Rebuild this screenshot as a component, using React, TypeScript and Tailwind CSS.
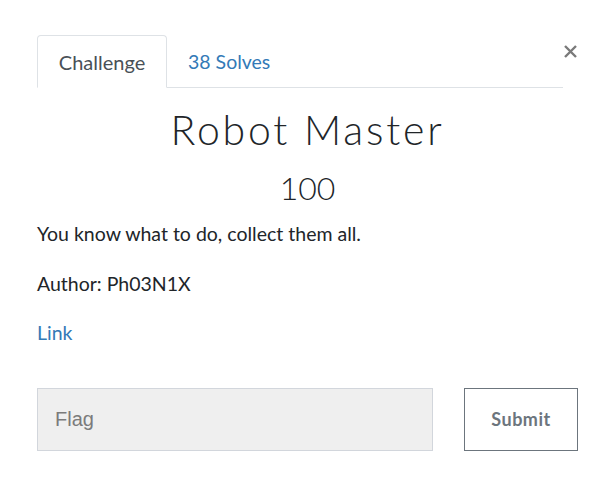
import React from "react";

export default function App() {
  return (
    <div className="relative w-[614px] h-[504px] bg-white text-[#212529] font-['Lato','Noto_Sans',sans-serif]">
      <button
        aria-label="Close"
        className="absolute left-[562px] top-[43px] w-[17px] h-[17px] flex items-center justify-center"
      >
        <svg width="15" height="15" viewBox="0 0 15 15">
          <path d="M2 2 L13 13 M13 2 L2 13" stroke="#7a7a7a" strokeWidth="2.4" strokeLinecap="butt" />
        </svg>
      </button>

      <div className="pl-[37px] pt-[35px] w-[578px]">
        <nav className="flex w-[526px] border-b border-[#dee2e6]">
          <div className="-mb-px w-[130px] h-[53px] border border-[#dee2e6] border-b-white rounded-t-[4px] bg-white flex items-center justify-center text-[20px] text-[#495057] pt-[1px]">
            Challenge
          </div>
          <div className="h-[52px] pl-[21px] flex items-center text-[19.5px] text-[#337ab7] pt-[1px]">
            38 Solves
          </div>
        </nav>

        <h2 className="mt-[18px] text-center text-[41px] leading-[48px] font-light tracking-[2.8px] text-[#212529]">
          Robot Master
        </h2>
        <h3 className="mt-[15px] text-center text-[32px] leading-[38px] font-light text-[#212529]">
          100
        </h3>

        <div className="mt-[13px] text-[19.5px] leading-[28px]">
          <p>You know what to do, collect them all.</p>
          <p className="mt-[22px]">Author: Ph03N1X</p>
          <p className="mt-[21px]">
            <a className="text-[#337ab7]">Link</a>
          </p>
        </div>

        <div className="mt-[41px] flex gap-[31px]">
          <input
            placeholder="Flag"
            className="w-[396px] h-[63px] bg-[#efefef] border border-[#d2d6dc] px-[17px] text-[20px] font-['Liberation_Sans',Arial,sans-serif] placeholder:text-[#7b7b7b] outline-none"
          />
          <button className="w-[114px] h-[63px] border border-[#6c757d] bg-white text-[#6c757d] font-bold text-[18px] tracking-[0.5px]">
            Submit
          </button>
        </div>
      </div>
    </div>
  );
}
